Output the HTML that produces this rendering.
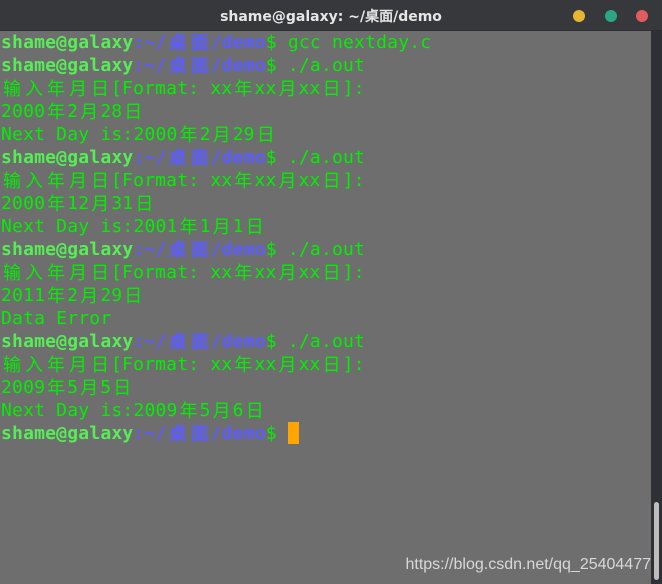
<!DOCTYPE html>
<html><head><meta charset="utf-8"><style>
html,body{margin:0;padding:0}
body{width:662px;height:584px;overflow:hidden;background:#6e6e6e;position:relative;font-family:"DejaVu Sans Mono","Liberation Mono","Noto Sans CJK SC",monospace}
.tb{position:absolute;left:0;top:0;width:662px;height:30px;background:#37383c;border-bottom:1px solid #2c2d30}
.tt{position:absolute;left:0;right:0;top:6px;text-align:center;color:#e6e6e6;font:bold 14px "DejaVu Sans","Liberation Sans",sans-serif}
.dot{position:absolute;top:10px;width:12px;height:12px;border-radius:50%}
.term{position:absolute;left:1px;top:31px;font-size:18px;line-height:23px;letter-spacing:0.2px;color:#00f000}
.l{height:23px;white-space:pre}
.u{color:#55ee55;font-weight:bold}
.p{color:#5c5cff;font-weight:bold}
.c{display:inline-block;width:22px;text-align:center;font-family:"Noto Sans CJK SC",sans-serif;letter-spacing:0;font-size:18px;line-height:23px;vertical-align:top}
.cur{display:inline-block;width:11px;height:22px;background:#ffa500;vertical-align:top}
.sb{position:absolute;left:651px;top:31px;width:11px;height:553px;background:#2f3035}
.th{position:absolute;left:654px;top:502px;width:5px;height:78px;border-radius:3px;background:#bdbdbd}
.wm{position:absolute;right:11px;top:556px;color:#d8d8d8;font:16px "Liberation Sans",sans-serif;white-space:nowrap}
</style></head><body>
<div class="tb"><div class="tt">shame@galaxy: ~/桌面/demo</div>
<div class="dot" style="left:573px;background:#e7b637"></div>
<div class="dot" style="left:605px;background:#2ba687"></div>
<div class="dot" style="left:636px;background:#e25c5f"></div></div>
<div class="term"><div class="l"><span class="u">shame@galaxy</span><span class="p">:~/<span class="c">桌</span><span class="c">面</span>/demo</span>$ gcc nextday.c</div><div class="l"><span class="u">shame@galaxy</span><span class="p">:~/<span class="c">桌</span><span class="c">面</span>/demo</span>$ ./a.out</div><div class="l"><span class="c">输</span><span class="c">入</span><span class="c">年</span><span class="c">月</span><span class="c">日</span>[Format: xx<span class="c">年</span>xx<span class="c">月</span>xx<span class="c">日</span>]:</div><div class="l">2000<span class="c">年</span>2<span class="c">月</span>28<span class="c">日</span></div><div class="l">Next Day is:2000<span class="c">年</span>2<span class="c">月</span>29<span class="c">日</span></div><div class="l"><span class="u">shame@galaxy</span><span class="p">:~/<span class="c">桌</span><span class="c">面</span>/demo</span>$ ./a.out</div><div class="l"><span class="c">输</span><span class="c">入</span><span class="c">年</span><span class="c">月</span><span class="c">日</span>[Format: xx<span class="c">年</span>xx<span class="c">月</span>xx<span class="c">日</span>]:</div><div class="l">2000<span class="c">年</span>12<span class="c">月</span>31<span class="c">日</span></div><div class="l">Next Day is:2001<span class="c">年</span>1<span class="c">月</span>1<span class="c">日</span></div><div class="l"><span class="u">shame@galaxy</span><span class="p">:~/<span class="c">桌</span><span class="c">面</span>/demo</span>$ ./a.out</div><div class="l"><span class="c">输</span><span class="c">入</span><span class="c">年</span><span class="c">月</span><span class="c">日</span>[Format: xx<span class="c">年</span>xx<span class="c">月</span>xx<span class="c">日</span>]:</div><div class="l">2011<span class="c">年</span>2<span class="c">月</span>29<span class="c">日</span></div><div class="l">Data Error</div><div class="l"><span class="u">shame@galaxy</span><span class="p">:~/<span class="c">桌</span><span class="c">面</span>/demo</span>$ ./a.out</div><div class="l"><span class="c">输</span><span class="c">入</span><span class="c">年</span><span class="c">月</span><span class="c">日</span>[Format: xx<span class="c">年</span>xx<span class="c">月</span>xx<span class="c">日</span>]:</div><div class="l">2009<span class="c">年</span>5<span class="c">月</span>5<span class="c">日</span></div><div class="l">Next Day is:2009<span class="c">年</span>5<span class="c">月</span>6<span class="c">日</span></div><div class="l"><span class="u">shame@galaxy</span><span class="p">:~/<span class="c">桌</span><span class="c">面</span>/demo</span>$ <span class="cur"></span></div></div>
<div class="sb"></div><div class="th"></div>
<div class="wm">https://blog.csdn.net/qq_25404477</div>
</body></html>
